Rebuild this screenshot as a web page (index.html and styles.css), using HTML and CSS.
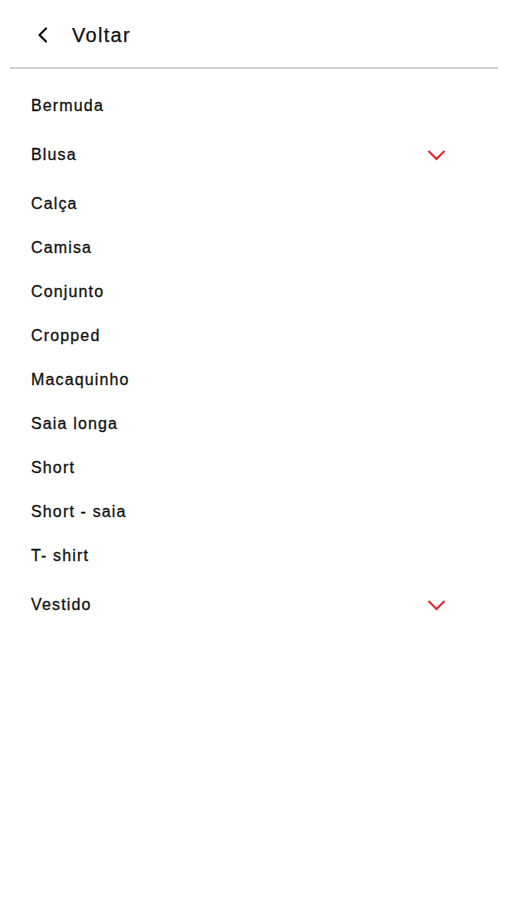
FILE: index.html
```html
<!DOCTYPE html>
<html lang="pt-BR">
<head>
<meta charset="utf-8">
<title>Categorias</title>
<link rel="stylesheet" href="styles.css">
</head>
<body>
<header class="topbar">
  <svg class="back" width="12" height="16" viewBox="0 0 12 16" aria-hidden="true"><path d="M9 1.5 L2.5 8 L9 14.5" fill="none" stroke="#111" stroke-width="2.2" stroke-linecap="round" stroke-linejoin="round"/></svg>
  <span class="title">Voltar</span>
</header>
<div class="divider"></div>
<ul class="list">
  <li class="row">Bermuda</li>
  <li class="row expand">Blusa<svg class="chev" width="19" height="12" viewBox="0 0 19 12" aria-hidden="true"><path d="M1.5 2 L9.5 10 L17.5 2" fill="none" stroke="#e8202f" stroke-width="2"/></svg></li>
  <li class="row">Calça</li>
  <li class="row">Camisa</li>
  <li class="row">Conjunto</li>
  <li class="row">Cropped</li>
  <li class="row">Macaquinho</li>
  <li class="row">Saia longa</li>
  <li class="row">Short</li>
  <li class="row">Short - saia</li>
  <li class="row">T- shirt</li>
  <li class="row expand">Vestido<svg class="chev" width="19" height="12" viewBox="0 0 19 12" aria-hidden="true"><path d="M1.5 2 L9.5 10 L17.5 2" fill="none" stroke="#e8202f" stroke-width="2"/></svg></li>
</ul>
</body>
</html>
```
FILE: styles.css
```css
html, body {
  margin: 0;
  padding: 0;
  background: #fff;
}
body {
  font-family: "Liberation Sans", Arial, sans-serif;
  color: #111;
  width: 506px;
}
.topbar {
  height: 67px;
  display: flex;
  align-items: center;
  padding: 3px 0 0 37px;
  box-sizing: border-box;
  gap: 23px;
}
.back {
  display: block;
}
.title {
  font-size: 20px;
  letter-spacing: 1.3px;
  color: #111;
  -webkit-text-stroke: 0.25px #111;
}
.divider {
  height: 2px;
  background: #d2d2d2;
  margin: 0 8px 0 10px;
}
.list {
  list-style: none;
  margin: 0;
  padding: 15px 61px 0 31px;
}
.row {
  height: 44px;
  display: flex;
  align-items: center;
  justify-content: space-between;
  font-size: 16px;
  letter-spacing: 1.15px;
  -webkit-text-stroke: 0.3px #111;
}
.row.expand {
  height: 54px;
}
.chev {
  display: block;
  margin-right: -1px;
}
```
